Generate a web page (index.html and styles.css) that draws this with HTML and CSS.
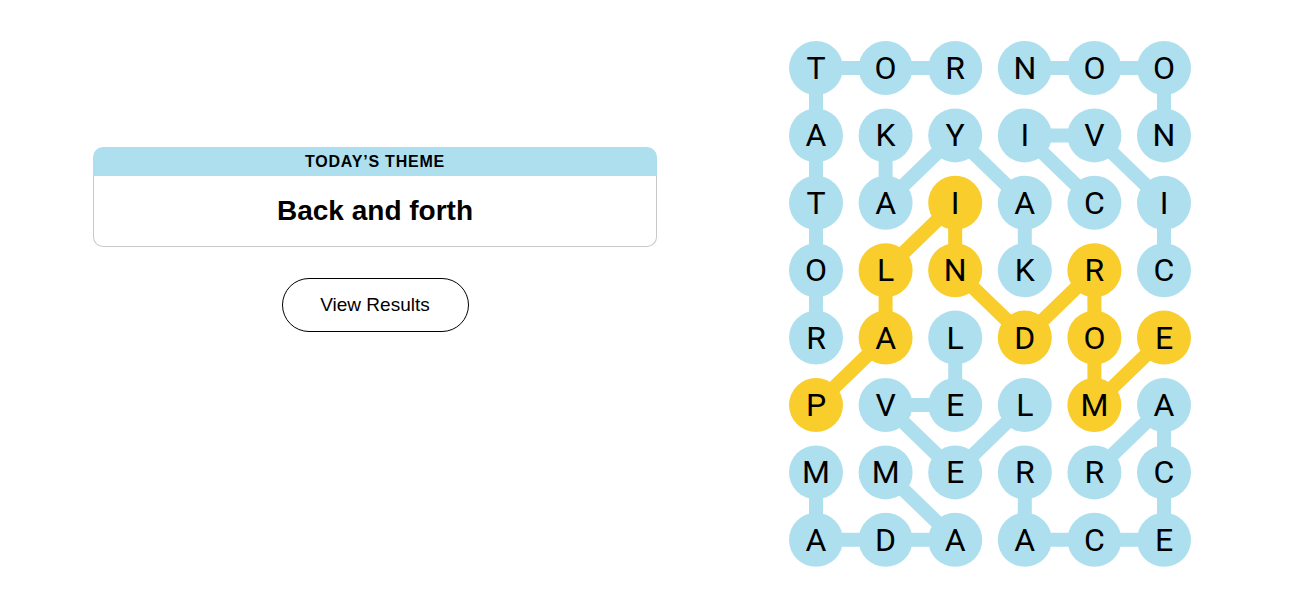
FILE: index.html
```html
<!DOCTYPE html>
<html lang="en">
	<head>
		<meta charset="UTF-8" />
		<meta name="viewport" content="width=device-width, initial-scale=1" />
		<title>Strands</title>
		<link rel="stylesheet" href="styles.css">
	</head>
	<body>
		<main class="page">
			<section class="side">
				<div class="theme">
					<div class="theme-label">TODAY’S THEME</div>
					<div class="theme-name">Back and forth</div>
				</div>
				<button class="results" type="button">View Results</button>
			</section>
			<svg
				id="board"
				class="board"
				xmlns="http://www.w3.org/2000/svg"
				width="402"
				height="526"
				viewBox="0 0 402 526"
			>
				<g id="lines"></g>
				<g id="dots"></g>
			</svg>
		</main>
		<script>
			var rows = [
				'TORNOO',
				'AKYIVN',
				'TAIACI',
				'OLNKRC',
				'RALDOE',
				'PVELMA',
				'MMERRC',
				'ADAACE',
			];

			// words as [row, col] steps, the spangram last
			var words = [
				{ path: [[0, 2], [0, 1], [0, 0], [1, 0], [2, 0], [3, 0], [4, 0]] },
				{ path: [[0, 3], [0, 4], [0, 5], [1, 5]] },
				{ path: [[1, 1], [2, 1], [1, 2], [2, 3], [3, 3]] },
				{ path: [[2, 4], [1, 3], [1, 4], [2, 5], [3, 5]] },
				{ path: [[4, 2], [5, 2], [5, 1], [6, 2], [5, 3]] },
				{ path: [[6, 0], [7, 0], [7, 1], [7, 2], [6, 1]] },
				{ path: [[6, 3], [7, 3], [7, 4], [7, 5], [6, 5], [5, 5], [6, 4]] },
				{
					path: [[5, 0], [4, 1], [3, 1], [2, 2], [3, 2], [4, 3], [3, 4], [4, 4], [5, 4], [4, 5]],
					span: true,
				},
			];

			var NS = 'http://www.w3.org/2000/svg';
			var lines = document.getElementById('lines');
			var dots = document.getElementById('dots');
			var spanCells = {};

			function cx(col) {
				return 27 + col * 69.6;
			}

			function cy(row) {
				return 27 + row * 67.4;
			}

			words.forEach(function (word) {
				var points = word.path.map(function (p) {
					if (word.span) spanCells[p[0] + ',' + p[1]] = true;
					return cx(p[1]) + ',' + cy(p[0]);
				});
				var line = document.createElementNS(NS, 'polyline');
				line.setAttribute('points', points.join(' '));
				line.setAttribute('class', word.span ? 'link span' : 'link');
				lines.appendChild(line);
			});

			rows.forEach(function (letters, r) {
				letters.split('').forEach(function (letter, c) {
					var dot = document.createElementNS(NS, 'circle');
					dot.setAttribute('cx', cx(c));
					dot.setAttribute('cy', cy(r));
					dot.setAttribute('r', 27);
					dot.setAttribute('class', spanCells[r + ',' + c] ? 'dot span' : 'dot');
					dots.appendChild(dot);

					var text = document.createElementNS(NS, 'text');
					text.setAttribute('x', cx(c));
					text.setAttribute('y', cy(r) + 11);
					text.setAttribute('class', 'letter');
					text.textContent = letter;
					dots.appendChild(text);
				});
			});
		</script>
	</body>
</html>
```

FILE: styles.css
```css
body {
	margin: 0;
	background: #fff;
	color: #000;
	font-family: 'Liberation Sans', Arial, sans-serif;
}

.page {
	display: flex;
	align-items: flex-start;
	gap: 132px;
	padding: 41px 0 0 93px;
}

.side {
	width: 564px;
	margin-top: 106px;
	display: flex;
	flex-direction: column;
	align-items: center;
}

.theme {
	width: 100%;
}

.theme-label {
	height: 29px;
	line-height: 30px;
	text-align: center;
	background-color: #aedfee;
	border-radius: 10px 10px 0 0;
	font-size: 16px;
	font-weight: bold;
	letter-spacing: 0.8px;
}

.theme-name {
	height: 70px;
	line-height: 70px;
	text-align: center;
	border: 1px solid #c9c9c9;
	border-top: none;
	border-radius: 0 0 10px 10px;
	font-size: 28px;
	font-weight: bold;
}

.results {
	margin-top: 31px;
	width: 187px;
	height: 54px;
	border: 1px solid #000;
	border-radius: 27px;
	background: #fff;
	color: #000;
	font-family: 'Liberation Sans', Arial, sans-serif;
	font-size: 19px;
	cursor: pointer;
}

.board {
	display: block;
	flex: none;
}

.link {
	fill: none;
	stroke: #aedfee;
	stroke-width: 14;
	stroke-linejoin: round;
	stroke-linecap: round;
}

.link.span {
	stroke: #f8cd2c;
}

.dot {
	fill: #aedfee;
}

.dot.span {
	fill: #f8cd2c;
}

.letter {
	font-family: 'Roboto', 'Liberation Sans', sans-serif;
	font-size: 32px;
	text-anchor: middle;
	fill: #000;
}
```
